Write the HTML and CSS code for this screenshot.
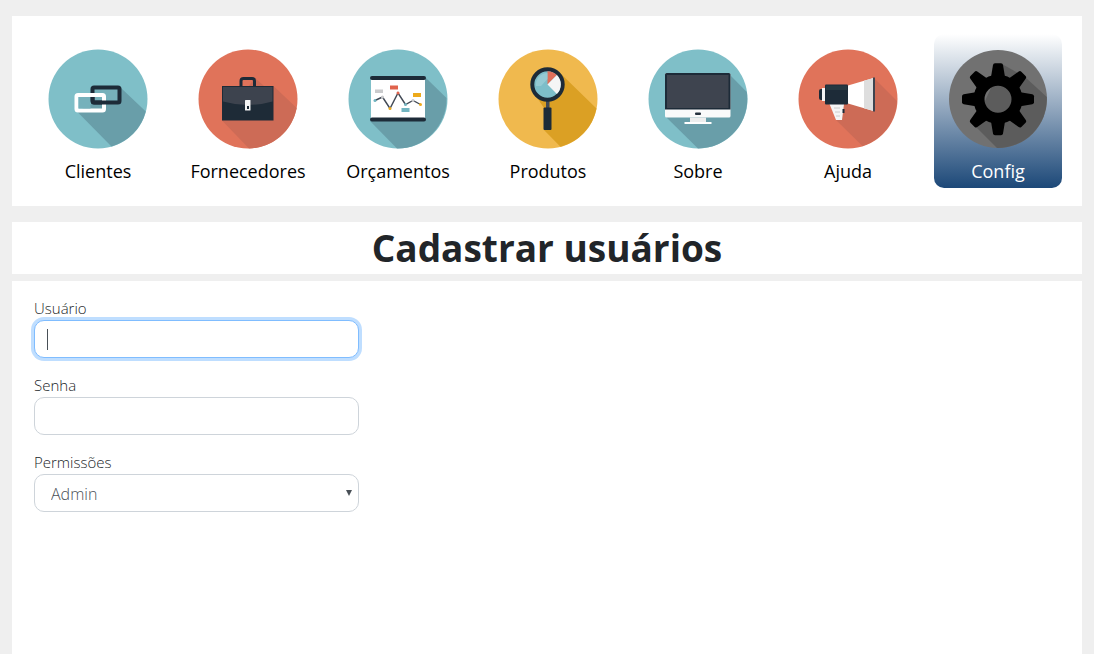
FILE: index.html
```html
<!DOCTYPE html>
<html lang="pt-BR">
<head>
<meta charset="utf-8">
<meta name="viewport" content="width=device-width, initial-scale=1">
<title>Cadastrar usuários</title>
<link rel="stylesheet" href="styles.css">
</head>
<body>
<nav class="menu">
  <a class="menu-item" href="#clientes">
    <svg class="menu-icon" viewBox="0 0 100 100" aria-hidden="true">
      <circle cx="50" cy="50" r="49.5" fill="#7fbfc8"/>
      <path d="M73 39L97.800 62.500A49.500 49.500 0 0 1 63.500 97.500L29 62.500Z" fill="#699ea9"/>
      <rect x="44.500" y="38.500" width="27" height="15" rx="1.500" fill="#76b1bb" stroke="#1d2b38" stroke-width="4"/>
      <rect x="28.500" y="46" width="27.500" height="15.500" rx="1.500" fill="none" stroke="#fff" stroke-width="4"/>
      <rect x="30.500" y="48" width="12" height="11.500" fill="#76b1bb"/>
      <path d="M44.500 48V51.500Q44.500 53.500 46.500 53.500H58" fill="none" stroke="#1d2b38" stroke-width="4"/>
    </svg>
    <span>Clientes</span>
  </a>
  <a class="menu-item" href="#fornecedores">
    <svg class="menu-icon" viewBox="0 0 100 100" aria-hidden="true">
      <circle cx="50" cy="50" r="49.500" fill="#e0735a"/>
      <path d="M57 29L66 37H75.500L98.700 59A49.500 49.500 0 0 1 51 99.500L24 71.500Z" fill="#cd6b56"/>
      <path d="M43 38V32Q43 29.500 45.500 29.500H54Q56.500 29.500 56.500 32V38" fill="none" stroke="#1d2b38" stroke-width="3"/>
      <rect x="24" y="37" width="51.500" height="34.500" fill="#1e2b37"/>
      <path d="M25 38H74.500V52.500Q50 59.500 25 52.500Z" fill="#3d434e"/>
      <rect x="47" y="51" width="5.500" height="10.500" rx="0.500" fill="#f4f4f4"/>
      <path d="M49 57H51V60H49Z" fill="#1e2b37"/>
    </svg>
    <span>Fornecedores</span>
  </a>
  <a class="menu-item" href="#orcamentos">
    <svg class="menu-icon" viewBox="0 0 100 100" aria-hidden="true">
      <circle cx="50" cy="50" r="49.500" fill="#7fbfc8"/>
      <path d="M78 29L98.500 49A49.500 49.500 0 0 1 49 99.500L22 72Z" fill="#699ea9"/>
      <rect x="23" y="29" width="54" height="41" fill="#fff"/>
      <path d="M24 29H76M24 70.500H76" stroke="#1d2b38" stroke-width="4" stroke-linecap="round"/>
      <path d="M27 51.500L34.500 48L42 59.500L50 44L57.500 55.500L65 51.500L72.500 55.500" fill="none" stroke="#414955" stroke-width="1.400"/>
      <rect x="27" y="40.500" width="8" height="3.500" fill="#c9cacc"/>
      <rect x="42" y="36.500" width="8" height="4" fill="#e0634d"/>
      <rect x="65" y="44" width="8" height="4" fill="#edaa1c"/>
      <rect x="53.500" y="59" width="8" height="4" fill="#72b5c1"/>
      <circle cx="27" cy="51.500" r="1.500" fill="#72b5c1"/>
      <circle cx="34.500" cy="48" r="1.500" fill="#c9cacc"/>
      <circle cx="42" cy="59.500" r="1.500" fill="#edaa1c"/>
      <circle cx="50" cy="44" r="1.500" fill="#e0634d"/>
      <circle cx="57.500" cy="55.500" r="1.500" fill="#72b5c1"/>
      <circle cx="65" cy="51.500" r="1.500" fill="#c9cacc"/>
      <circle cx="72.500" cy="55.500" r="1.500" fill="#edaa1c"/>
    </svg>
    <span>Orçamentos</span>
  </a>
  <a class="menu-item" href="#produtos">
    <svg class="menu-icon" viewBox="0 0 100 100" aria-hidden="true">
      <circle cx="50" cy="50" r="49.500" fill="#f0b94e"/>
      <path d="M62 24L98.500 59.500A49.500 49.500 0 0 1 62.500 97.800L46 81V59L40 50Z" fill="#dba024"/>
      <path d="M42 53H48V59Z" fill="#dba024"/>
      <rect x="48" y="51" width="3.500" height="8" fill="#414955"/>
      <rect x="45.500" y="58.500" width="8" height="22.500" rx="1" fill="#1d2b38"/>
      <circle cx="49.500" cy="35.500" r="15.200" fill="#7dbec9" stroke="#1d2b38" stroke-width="4"/>
      <path d="M49.500 35.500V22.200A13.300 13.300 0 0 1 58.900 26.100Z" fill="#e0705b"/>
      <path d="M49.500 35.500L58.900 26.100A13.300 13.300 0 0 1 58.900 44.900Z" fill="#f5f5f5"/>
      <path d="M38 37A11.500 11.500 0 0 1 49.500 24V30L43 37Z" fill="#a3d1d8" opacity=".65"/>
    </svg>
    <span>Produtos</span>
  </a>
  <a class="menu-item" href="#sobre">
    <svg class="menu-icon" viewBox="0 0 100 100" aria-hidden="true">
      <circle cx="50" cy="50" r="49.500" fill="#7fbfc8"/>
      <path d="M82 26L98.800 43A49.500 49.500 0 0 1 50 99.500L18 68Z" fill="#699ea9"/>
      <rect x="17" y="24" width="65.500" height="44.500" rx="1.500" fill="#fafafa"/>
      <path d="M17 60.500V25.500Q17 24 18.500 24H81Q82.500 24 82.500 25.500V60.500Z" fill="#1d2b38"/>
      <rect x="19" y="26" width="61.500" height="33" fill="#3e444f"/>
      <rect x="47" y="63.500" width="6" height="2.500" rx="1" fill="#26323e"/>
      <rect x="42" y="68.500" width="16" height="5" fill="#eee"/>
      <rect x="36.500" y="73" width="27" height="2" fill="#fff"/>
    </svg>
    <span>Sobre</span>
  </a>
  <a class="menu-item" href="#ajuda">
    <svg class="menu-icon" viewBox="0 0 100 100" aria-hidden="true">
      <circle cx="50" cy="50" r="49.500" fill="#e0735a"/>
      <path d="M77 30L99 52A49.500 49.500 0 0 1 64.500 97L38 71L44 55Z" fill="#cd6b56"/>
      <rect x="21" y="40" width="6" height="11" rx="2" fill="#1d2b38"/>
      <rect x="24" y="39" width="4" height="13" fill="#f4f4f4"/>
      <path d="M50 36.500L75.500 29V62L50 54.500Z" fill="#fff"/>
      <path d="M66 31.800L75.500 29V62L66 59.200Z" fill="#dedede"/>
      <path d="M75 28.500H77V62.500H75Z" fill="#3e444f"/>
      <path d="M31.500 55H46L44 71H38Z" fill="#f5f5f5"/>
      <path d="M36 59H42M37 63H42M38 67H42" stroke="#ccc"/>
      <rect x="44.500" y="60" width="2" height="4" fill="#1d2b38"/>
      <rect x="27" y="35.500" width="23" height="20" rx="1" fill="#1d2b38"/>
      <path d="M28 36.500H49V41H28Z" fill="#263842"/>
    </svg>
    <span>Ajuda</span>
  </a>
  <a class="menu-item menu-item-active" href="#config" aria-current="page">
    <svg class="menu-icon" viewBox="0 0 100 100" aria-hidden="true">
      <defs>
        <path id="tooth" d="M43 28L45 16Q45.300 14.300 47 14.300H53Q54.700 14.300 55 16L57 28Z"/>
      </defs>
      <circle cx="50" cy="50" r="49" fill="#717171"/>
      <path d="M54 15L77 28L98.800 48A49 49 0 0 1 49 99L26 76Z" fill="#5c5c5c"/>
      <circle cx="50" cy="50.300" r="19" fill="none" stroke="#000" stroke-width="11"/>
      <use href="#tooth"/>
      <use href="#tooth" transform="rotate(45 50 50.300)"/>
      <use href="#tooth" transform="rotate(90 50 50.300)"/>
      <use href="#tooth" transform="rotate(135 50 50.300)"/>
      <use href="#tooth" transform="rotate(180 50 50.300)"/>
      <use href="#tooth" transform="rotate(225 50 50.300)"/>
      <use href="#tooth" transform="rotate(270 50 50.300)"/>
      <use href="#tooth" transform="rotate(315 50 50.300)"/>
    </svg>
    <span>Config</span>
  </a>
</nav>

<header class="title-bar">
  <h1 class="title">Cadastrar usuários</h1>
</header>

<main class="content">
  <form class="form">
    <div class="field">
      <label class="label" for="usuario">Usuário</label>
      <input class="control control-user" id="usuario" type="text" autofocus>
    </div>
    <div class="field">
      <label class="label" for="senha">Senha</label>
      <input class="control" id="senha" type="password">
    </div>
    <div class="field">
      <label class="label" for="permissoes">Permissões</label>
      <div class="select-box">
        <select class="control control-select" id="permissoes">
          <option>Admin</option>
        </select>
        <svg class="select-arrow" viewBox="0 0 6 6" aria-hidden="true"><path d="M0 0H6L3 6Z" fill="#495057"/></svg>
      </div>
    </div>
  </form>
</main>
</body>
</html>
```
FILE: styles.css
```css
* {
  box-sizing: border-box;
}

body {
  display: flex;
  flex-direction: column;
  min-height: 100vh;
  margin: 0;
  padding: 16px 12px 0;
  background: #efefef;
  color: #212529;
  font-family: "Open Sans", "Noto Sans", sans-serif;
  font-size: 16px;
}

.menu {
  display: flex;
  justify-content: space-between;
  padding: 18px 20px 18px 22px;
  background: #fff;
}

.menu-item {
  display: flex;
  flex-direction: column;
  align-items: center;
  width: 128px;
  padding: 15px 0 5px;
  border-radius: 10px;
  color: #000;
  font-size: 18px;
  font-weight: 500;
  line-height: 24px;
  text-decoration: none;
}

.menu-icon {
  width: 100px;
  height: 100px;
  margin-bottom: 10px;
}

.menu-item-active {
  background: linear-gradient(#fff, #1c4878);
  color: #fff;
}

.title-bar {
  margin: 16px 0 7px;
  background: #fff;
}

.title {
  margin: 0;
  font-size: 37px;
  font-weight: 700;
  line-height: 52px;
  text-align: center;
}

.content {
  flex: 1;
  padding: 16px 22px;
  background: #fff;
}

.form {
  display: flex;
  flex-direction: column;
  gap: 16px;
  max-width: 325px;
}

.label {
  display: block;
  font-size: 15px;
  font-weight: 300;
  line-height: 23px;
}

.control {
  display: block;
  width: 100%;
  height: 38px;
  padding: 6px 12px;
  border: 1px solid #ced4da;
  border-radius: 10px;
  outline: 0;
  background: #fff;
  color: #495057;
  font: inherit;
  font-weight: 300;
}

.control:focus {
  border-color: #80bdff;
  box-shadow: 0 0 0 3px #bfdeff;
}

.control-user:focus {
  background: linear-gradient(#495057, #495057) 12px center / 1px 21px no-repeat #fff;
  caret-color: transparent;
}

.select-box {
  display: grid;
  align-items: center;
}

.control-select {
  grid-area: 1 / 1;
  padding: 2px 16px 0;
  appearance: none;
}

.select-arrow {
  grid-area: 1 / 1;
  justify-self: end;
  width: 6px;
  height: 6px;
  margin-right: 7px;
  pointer-events: none;
}
```
